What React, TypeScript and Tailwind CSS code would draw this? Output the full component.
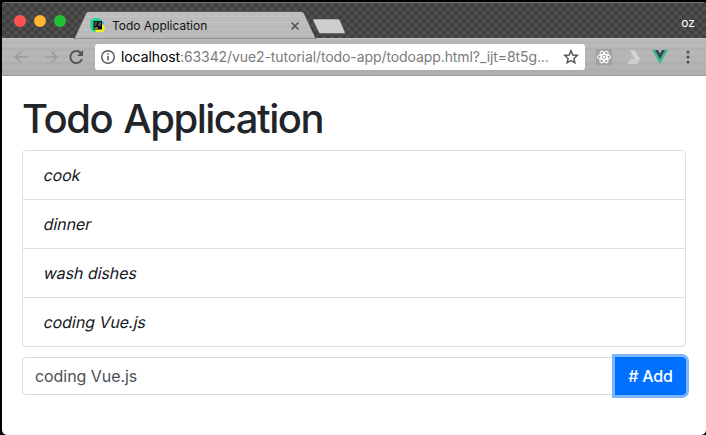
import React from "react";

const todos = ["cook", "dinner", "wash dishes", "coding Vue.js"];

function TabStrip() {
  return (
    <div className="relative flex h-[36px] items-center border-t border-[#777] bg-[#494949] bg-[conic-gradient(#404040_25%,#4e4e4e_0_50%,#404040_0_75%,#4e4e4e_0)] bg-[length:8px_8px]">
      <svg className="absolute left-[70px] top-[8px]" width="280" height="28" viewBox="0 0 280 28">
        <defs>
          <linearGradient id="tab" x1="0" y1="0" x2="0" y2="1">
            <stop offset="0" stopColor="#bdbdbd" />
            <stop offset="1" stopColor="#b8b8b8" />
          </linearGradient>
        </defs>
        <path d="M2 28L14 2Q15 0.5 17 0.5H229Q231 0.5 232 2L244 28Z" fill="url(#tab)" stroke="#383838" strokeWidth="0.6" />
        <path d="M14 5.500H233M11 11.500H236M8 18.500H239M6 23.500H242" stroke="#c2c2c2" strokeWidth="1" />
        <path d="M242 8H266Q267.500 8 268 9.500L273 21Q273.500 22.500 272 22.500H249Q247.500 22.500 246.500 21L241 9.500Q240.500 8 242 8Z" fill="#cecece" stroke="#454545" strokeWidth="0.5" />
      </svg>
      <div className="relative flex h-full w-full items-center">
        <div className="flex gap-2 pl-[12px]">
          <span className="h-3 w-3 rounded-full bg-[#ff514d]" />
          <span className="h-3 w-3 rounded-full bg-[#ffb52d]" />
          <span className="h-3 w-3 rounded-full bg-[#23c132]" />
        </div>
        <svg className="ml-[24px] mt-[9px]" width="16" height="16" viewBox="0 0 16 16">
          <path d="M0.500 3L5 1L10 1.500L8 15L3 14.500L0.500 11.500Z" fill="#12dc8c" />
          <path d="M10 2L14.500 6L12 9H9Z" fill="#12c4f0" />
          <path d="M12 7L15 10L14 14.500L6 15.500L5 12Z" fill="#f4f318" />
          <rect x="3.500" y="4" width="8.500" height="8.500" fill="#080808" />
          <path d="M4.500 6H7M8.500 6H11M4.500 8H6.500M8 8H11" stroke="#999" strokeWidth="1" />
          <path d="M4.500 11H8" stroke="#ddd" strokeWidth="1" />
        </svg>
        <span className="ml-[6px] mt-[10px] w-[170px] whitespace-nowrap text-[12px] leading-4 tracking-[-0.02px] text-[#141414]">Todo Application</span>
        <svg className="ml-[8px] mt-[10px]" width="10" height="10" viewBox="0 0 10 10"><path d="M1.500 1.500L8.500 8.500M8.500 1.500L1.500 8.500" stroke="#505050" strokeWidth="1.600" /></svg>
        <span className="ml-auto mr-[11px] mt-[5px] text-[12px] leading-4 text-white">oz</span>
      </div>
    </div>
  );
}

function Toolbar() {
  return (
    <div className="flex h-[38px] items-center border-b border-t border-b-[#999] border-t-[#c9c9c9] bg-[#b5b5b5] bg-[linear-gradient(180deg,#bbb_0px,#b5b5b5_4px,#bcbcbc_7px,#b0b0b0_10px,#b8b8b8_14px,#b2b2b2_17px,#b8b8b8_21px,#aeaeae_24px,#b5b5b5_28px,#adadad_32px,#b0b0b0_36px)]">
      <svg className="ml-[10px]" width="76" height="20" viewBox="0 0 76 20" fill="none">
        <path d="M16 10H3.500M9 4.500L3.500 10L9 15.500M33 10H45M39.500 4.500L45 10L39.500 15.500" stroke="#9b9b9b" strokeWidth="1.600" />
        <path d="M68.800 6A6 6 0 1 0 70 12" stroke="#555" strokeWidth="2" />
        <path d="M71 3V9H65Z" fill="#555" />
      </svg>
      <div className="ml-[7px] flex h-[26px] w-[490px] items-center rounded-[3px] bg-white pl-[5px] pr-[6px]">
        <svg width="16" height="16" viewBox="0 0 16 16" fill="none" stroke="#555">
          <circle cx="8" cy="8" r="6.300" strokeWidth="1.400" />
          <path d="M8 7V11.500M8 4.300V5.800" strokeWidth="1.500" />
        </svg>
        <span className="ml-[5px] whitespace-nowrap text-[14px] leading-5 tracking-[-0.09px] text-[#7b7b7b]"><span className="text-black">localhost</span>:63342/vue2-tutorial/todo-app/todoapp.html?_ijt=8t5g...</span>
        <svg className="ml-auto shrink-0" width="16" height="16" viewBox="0 0 16 16"><path d="M8 1.800L9.800 6L14.300 6.400L10.900 9.400L11.900 13.800L8 11.500L4.100 13.800L5.100 9.400L1.700 6.400L6.200 6Z" fill="none" stroke="#505050" strokeWidth="1.400" /></svg>
      </div>
      <svg className="ml-[11px]" width="16" height="16" viewBox="0 0 16 16" fill="none" stroke="#fff" strokeWidth="1.100">
        <rect width="16" height="16" rx="1" fill="#a0a0a0" stroke="none" />
        <ellipse cx="8" cy="8" rx="6.500" ry="2.500" />
        <ellipse cx="8" cy="8" rx="6.500" ry="2.500" transform="rotate(60 8 8)" />
        <ellipse cx="8" cy="8" rx="6.500" ry="2.500" transform="rotate(120 8 8)" />
        <circle cx="8" cy="8" r="1.300" fill="#fff" stroke="none" />
      </svg>
      <svg className="ml-[12px]" width="16" height="16" viewBox="0 0 16 16">
        <path d="M5.500 1H10.500L16 10L13 15L10.500 9.500Z" fill="#d4d4d4" />
        <path d="M5.500 1L8.500 6.500L4 15L0.500 10Z" fill="#b8b8b8" />
        <path d="M6.500 10H16L13 15H3.500Z" fill="#cecece" />
      </svg>
      <svg className="ml-[12px]" width="16" height="16" viewBox="0 0 16 16">
        <path d="M0 1H16L8 15Z" fill="#40b983" />
        <path d="M3 1H13L8 10Z" fill="#353f5e" />
        <path d="M6 1H10L8 4.500Z" fill="#b8b8b8" />
      </svg>
      <svg className="ml-[18px]" width="4" height="16" viewBox="0 0 4 16" fill="#505050"><circle cx="2" cy="3" r="1.500" /><circle cx="2" cy="8" r="1.500" /><circle cx="2" cy="13" r="1.500" /></svg>
    </div>
  );
}

export default function App() {
  return (
    <div className="h-[435px] w-[706px] overflow-hidden bg-black pl-[2px] pt-[2px] font-['Inter','Liberation_Sans',sans-serif]">
      <div className="h-[433px] overflow-hidden rounded-b-[5px] rounded-t-[4px] bg-white">
        <TabStrip />
        <Toolbar />
        <main className="pl-[20px] pr-[18px] pt-[19px]">
          <h1 className="h-[55px] whitespace-nowrap text-[40px] font-medium leading-[48px] tracking-[-1.48px] text-[#212529] [word-spacing:2px]">Todo Application</h1>
          <ul className="w-[664px] rounded-[4px] border border-[#dfdfdf]">
            {todos.map((todo) => (
              <li key={todo} className="flex h-[49px] items-center border-b border-[#dfdfdf] pl-[21px] pr-[20px] text-[16px] tracking-[-0.06px] text-[#16191c] last:h-[48px] last:border-b-0">
                <em className="inline-block -skew-x-12 not-italic">{todo}</em>
              </li>
            ))}
          </ul>
          <form className="mt-[10px] flex h-[38px] w-[664px]">
            <input readOnly value="coding Vue.js" className="min-w-0 flex-1 rounded-l-[4px] border border-r-0 border-[#d8dadd] px-[12px] text-[16px] tracking-[-0.06px] text-[#495057] outline-none" />
            <button type="button" className="relative w-[71px] rounded-r-[4px] bg-[#0070ff] text-[16px] font-medium tracking-[-0.2px] text-white shadow-[0_0_0_3px_#7fb7ff]"># Add</button>
          </form>
        </main>
      </div>
    </div>
  );
}
